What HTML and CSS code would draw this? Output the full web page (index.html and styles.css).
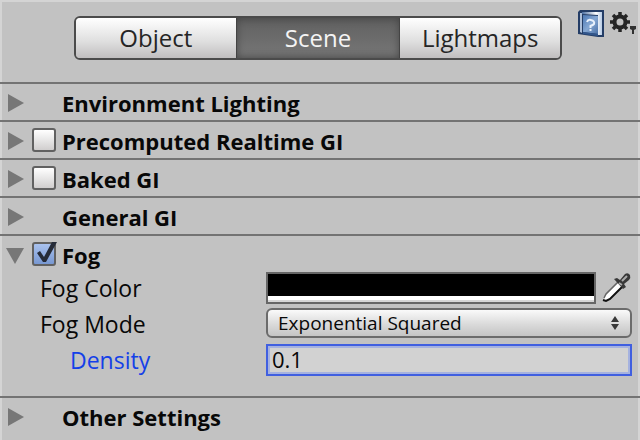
FILE: index.html
```html
<!DOCTYPE html>
<html lang="en">
<head>
<meta charset="utf-8">
<title>Lighting</title>
<link rel="stylesheet" href="styles.css">
</head>
<body>
<main class="panel">
  <header class="toolbar">
    <nav class="tabs" aria-label="Lighting sections">
      <button class="tab" type="button">Object</button>
      <button class="tab tab-active" type="button" aria-pressed="true">Scene</button>
      <button class="tab" type="button">Lightmaps</button>
    </nav>
    <div class="tools">
      <button class="icon-button" type="button" aria-label="Help">
        <svg width="26" height="28" viewBox="0 0 26 28">
          <defs>
            <linearGradient id="cover" x1="0" y1="0" x2="1" y2="1"><stop offset="0" stop-color="#4d79b5"/><stop offset=".5" stop-color="#86a8d3"/><stop offset="1" stop-color="#4a70a6"/></linearGradient>
            <linearGradient id="pages" x1="0" y1="0" x2="1" y2="0"><stop offset="0" stop-color="#4a6da0"/><stop offset=".7" stop-color="#fff"/><stop offset="1" stop-color="#b8cce6"/></linearGradient>
          </defs>
          <path d="M2 0H26V27H20L0 24V2Z" fill="#243d66"/>
          <path d="M4 2H24V25H20V5L4 4Z" fill="url(#pages)"/>
          <path d="M2 3L4 3V23L2 22Z" fill="#aebfd8"/>
          <path d="M5 5L20 6V24L5 22Z" fill="url(#cover)"/>
          <path d="M5 22L20 24V26L5 24Z" fill="#31568c"/>
          <path d="M9 12Q10 9 13 10Q17 11 16 14Q15 15 12.500 16V18M12.500 19V21" fill="none" stroke="#e9f1fc" stroke-width="2"/>
        </svg>
      </button>
      <button class="icon-button" type="button" aria-label="Options">
        <svg width="28" height="28" viewBox="0 0 28 28">
          <circle cx="10" cy="12" r="5.500" fill="none" stroke="#252525" stroke-width="4"/>
          <path d="M10 2V6M10 18V22M0 12H4M16 12H20M3 5L6 8M14 16L17 19M17 5L14 8M6 16L3 19" stroke="#252525" stroke-width="3.500"/>
          <path d="M20 16H26V19L24 20V24H22V20L20 19Z" fill="#303030"/>
        </svg>
      </button>
    </div>
  </header>

  <section class="section">
    <button class="fold" type="button" aria-label="Expand Environment Lighting"><svg width="20" height="20" viewBox="0 0 20 20"><path d="M2 1L18 10L2 19Z"/></svg></button>
    <h2 class="title">Environment Lighting</h2>
  </section>
  <section class="section">
    <button class="fold" type="button" aria-label="Expand Precomputed Realtime GI"><svg width="20" height="20" viewBox="0 0 20 20"><path d="M2 1L18 10L2 19Z"/></svg></button>
    <span class="tick"><input class="box" type="checkbox" id="realtime"></span>
    <h2 class="title"><label for="realtime">Precomputed Realtime GI</label></h2>
  </section>
  <section class="section">
    <button class="fold" type="button" aria-label="Expand Baked GI"><svg width="20" height="20" viewBox="0 0 20 20"><path d="M2 1L18 10L2 19Z"/></svg></button>
    <span class="tick"><input class="box" type="checkbox" id="baked"></span>
    <h2 class="title"><label for="baked">Baked GI</label></h2>
  </section>
  <section class="section">
    <button class="fold" type="button" aria-label="Expand General GI"><svg width="20" height="20" viewBox="0 0 20 20"><path d="M2 1L18 10L2 19Z"/></svg></button>
    <h2 class="title">General GI</h2>
  </section>
  <section class="section">
    <button class="fold" type="button" aria-label="Collapse Fog" aria-expanded="true"><svg width="20" height="20" viewBox="0 0 20 20"><path d="M0 3H18L9 19Z"/></svg></button>
    <span class="tick"><input class="box" type="checkbox" id="fog" checked><svg class="check" width="26" height="24" viewBox="0 0 26 24"><path d="M5 11L8 9L12 15L20 0H25L14 20H11Z" fill="#252b38"/></svg></span>
    <h2 class="title"><label for="fog">Fog</label></h2>
  </section>
  <div class="fields">
    <div class="field">
      <label class="name" for="color">Fog Color</label>
      <div class="control">
        <button class="swatch" id="color" type="button" aria-label="Fog Color"></button>
        <button class="picker" type="button" aria-label="Pick color">
          <svg width="30" height="32" viewBox="0 0 30 32">
            <path d="M2 29L3 24L17 10L21 14L7 27Z" fill="#fff"/>
            <path d="M2 26L4 22L16 10" fill="none" stroke="#666" stroke-width="1.500"/>
            <path d="M1 28L4 29L8 27L21 14" fill="none" stroke="#111" stroke-width="2"/>
            <path d="M12 7L15 6L18 8L23 2Q26 0 28 3Q29 6 27 8L22 12L24 15L21 17Z" fill="#383838"/>
            <path d="M17 11L20 13M20 9L25 4" stroke="#aaa" stroke-width="2"/>
          </svg>
        </button>
      </div>
    </div>
    <div class="field">
      <label class="name" for="mode">Fog Mode</label>
      <div class="control">
        <select class="popup" id="mode"><option>Exponential Squared</option></select>
        <svg class="arrows" width="10" height="16" viewBox="0 0 10 16"><path d="M5 1L9 7H1ZM1 9H9L5 15Z" fill="#383838"/></svg>
      </div>
    </div>
    <div class="field">
      <label class="name name-active" for="density">Density</label>
      <div class="control"><input class="number" id="density" type="text" value="0.1"></div>
    </div>
  </div>
  <section class="section">
    <button class="fold" type="button" aria-label="Expand Other Settings"><svg width="20" height="20" viewBox="0 0 20 20"><path d="M2 1L18 10L2 19Z"/></svg></button>
    <h2 class="title">Other Settings</h2>
  </section>
</main>
</body>
</html>
```
FILE: styles.css
```css
* { box-sizing: border-box; }

body {
  margin: 0;
  background: #c2c2c2;
  color: #080808;
  font: 22px/36px "Open Sans", "Noto Sans", sans-serif;
}

button, input, select { margin: 0; font: inherit; color: inherit; }
button { padding: 0; border: 0; background: none; }
svg { display: block; }

.panel {
  min-height: 100vh;
  border: solid #d4d4d4;
  border-width: 2px 2px 0;
}

.toolbar {
  display: flex;
  align-items: flex-start;
  height: 80px;
  padding-left: 72px;
}

.tabs {
  display: grid;
  grid-template-columns: 32fr 33fr 32fr;
  flex: 1;
  height: 44px;
  margin-top: 14px;
  overflow: hidden;
  border: 2px solid #4b4b4b;
  border-radius: 6px;
}

.tab {
  background: linear-gradient(#fff, #dedede 60%, #c0bebf);
  color: #252525;
  font-size: 24px;
  line-height: 36px;
}

.tab-active {
  background: linear-gradient(#606060, #777);
  box-shadow: inset 0 0 8px #404040, inset 1px 0 #484848, inset -1px 0 #484848;
  color: #f4f4f4;
}

.tools {
  display: flex;
  gap: 6px;
  margin: 8px 0 0 16px;
}

.section {
  display: flex;
  align-items: center;
  height: 38px;
  margin: 0 -2px;
  padding: 2px 0 0 6px;
  border-top: 2px solid #737373;
}

.fold { width: 20px; fill: #777; }

.tick {
  position: relative;
  width: 24px;
  height: 24px;
  margin: 0 -24px 2px 6px;
}

.box {
  appearance: none;
  display: block;
  width: 24px;
  height: 24px;
  border: 2px solid #616161;
  border-radius: 3px;
  background: linear-gradient(#fff, #d0cece);
}

.box:checked { background: linear-gradient(#a9c2ee, #7898d2); }

.check { position: absolute; left: 0; top: 0; pointer-events: none; }

.title {
  margin: 0 0 0 36px;
  font-size: 22px;
  font-weight: 700;
  line-height: 36px;
}

.tick + .title { margin-left: 30px; }

.fields { padding: 0 6px 16px 38px; }

.field {
  display: grid;
  grid-template-columns: 226px 1fr;
  height: 36px;
}

.name { font-size: 23px; line-height: 32px; }
.name-active { padding-left: 30px; color: #1440e8; }

.control { position: relative; display: flex; align-items: flex-start; }

.swatch {
  flex: 1;
  height: 32px;
  border: 2px solid #666;
  background: linear-gradient(#000 22px, #fff 22px, #fff 26px, #d6d6d6 26px);
}

.picker { width: 36px; padding-left: 6px; }

.popup {
  appearance: none;
  width: 100%;
  height: 30px;
  padding: 0 30px 0 10px;
  border: 2px solid #6b6b6b;
  border-radius: 6px;
  background: linear-gradient(#fafafa, #dadada 55%, #c4c4c4);
  font-size: 19px;
  line-height: 26px;
}

.arrows { position: absolute; right: 12px; top: 7px; pointer-events: none; }

.number {
  width: 100%;
  height: 32px;
  padding: 0 4px 2px;
  border: 2px solid #405fe0;
  outline: 0;
  background: #d2d2d2;
  box-shadow: inset 0 0 0 2px #a5b2df;
}
```
